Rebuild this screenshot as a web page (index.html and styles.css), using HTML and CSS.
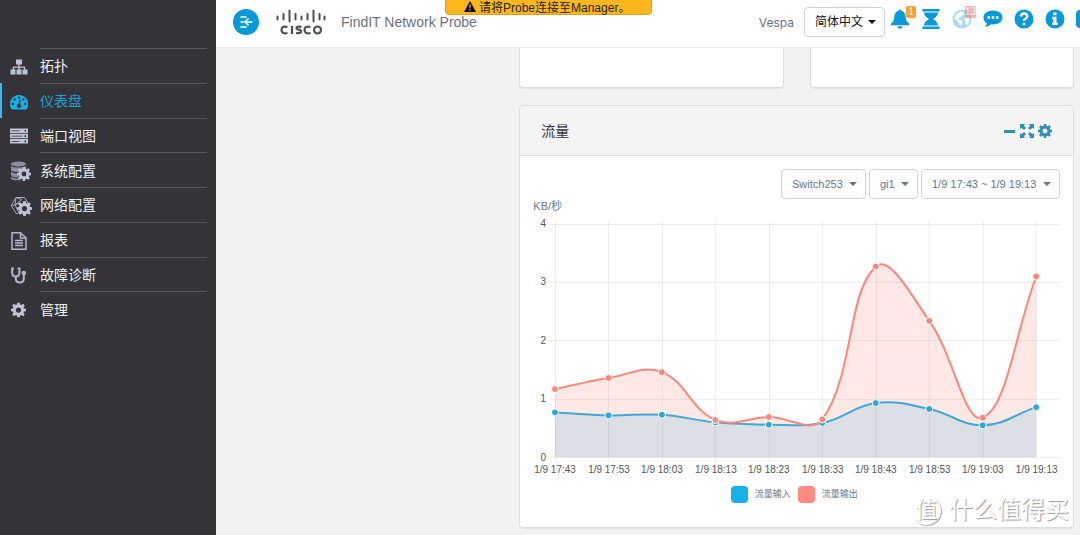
FILE: index.html
```html
<!DOCTYPE html>
<html lang="zh-CN">
<head>
<meta charset="utf-8">
<title>FindIT Network Probe</title>
<link rel="stylesheet" href="styles.css">
</head>
<body>
<svg class="defs" aria-hidden="true">
  <symbol id="gear" viewBox="0 0 16 16"><path fill-rule="evenodd" d="M6.7 0h2.6l.4 2.2 1.3.5L12.9 1.400l1.800 1.800-1.300 1.900.5 1.200 2.100.4v2.600l-2.100.4-.5 1.200 1.300 1.900-1.800 1.800-1.900-1.300-1.300.5L9.300 16H6.700l-.4-2.200-1.300-.5-1.900 1.300-1.800-1.800 1.300-1.900-.5-1.200L0 9.300V6.700l2.100-.4.5-1.200-1.300-1.900 1.800-1.800L5 2.700l1.300-.5zM8 5.200a2.800 2.800 0 1 0 0 5.600 2.800 2.800 0 0 0 0-5.600z"/></symbol>
</svg>
<div class="app">
  <aside class="sidebar">
    <nav>
      <ul class="menu">
        <li><a class="item" href="#"><svg class="icon" viewBox="0 0 18 18"><path d="M6 1.500h6v5H9.700v2h5.500v3H17.500V16.500h-5v-5h1.300V9.800H9.700v1.700h1.800v5h-5v-5h1.800V9.800H4.200v1.700h1.300v5h-5v-5h2.300v-3h5.500v-2H6z"/></svg><span class="label">拓扑</span></a></li>
        <li><a class="item active" href="#"><svg class="icon" viewBox="0 0 18 18"><path fill-rule="evenodd" d="M9 2a9 9 0 0 1 7.700 13.700q-.3.800-1.200.8h-13q-.9 0-1.200-.8A9 9 0 0 1 9 2zM9 3.400a1.200 1.200 0 1 0 0 2.400 1.200 1.200 0 0 0 0-2.400zM4.700 5.200a1.200 1.200 0 1 0 0 2.400 1.200 1.200 0 0 0 0-2.400zM13.300 5.200a1.200 1.200 0 1 0 0 2.400 1.200 1.200 0 0 0 0-2.400zM2.800 9.700a1.200 1.200 0 1 0 0 2.400 1.200 1.200 0 0 0 0-2.400zM15.200 9.700a1.200 1.200 0 1 0 0 2.400 1.200 1.200 0 0 0 0-2.400zM9.700 6.500 8.400 11a2 2 0 1 0 1.600.3L11 7z"/></svg><span class="label">仪表盘</span></a></li>
        <li><a class="item" href="#"><svg class="icon" viewBox="0 0 18 18"><path fill-rule="evenodd" d="M0 1.500h18v4.500H0zM0 6.800h18v4.500H0zM0 12.100h18v4.500H0zM1.500 3.400v.8h8v-.8zM1.500 8.700v.8h11v-.8zM1.500 14v.8h8V14zM14.500 3v1.600h1.600V3zM14.500 8.300v1.600h1.600V8.300zM14.500 13.600v1.600h1.600v-1.600z"/></svg><span class="label">端口视图</span></a></li>
        <li><a class="item" href="#"><svg class="icon wide" viewBox="0 0 22 20"><g fill="#8c8f9e"><ellipse cx="8.500" cy="3" rx="7.500" ry="2.500"/><path d="M1 4.500q1 2 7.500 2t7.500-2V8q-6 0-7 3-7 .3-8-2zM1 10.500q1 2 7 2l.5 4Q2 16.500 1 14zM1 15.500q1 2 8.500 2l1 1.500Q2 20 1 17.500z"/></g><use href="#gear" x="7" y="6" width="14" height="14"/></svg><span class="label">系统配置</span></a></li>
        <li><a class="item" href="#"><svg class="icon wide" viewBox="0 0 22 20"><path class="line" d="M6 1.500h8.500L18 7M6 1.500 1.200 9.500l5 8h2M6 1.500 5 9l4 8M1.200 9.500 5 9l7-5.500L6 1.500M5 9l4-2"/><use href="#gear" x="7" y="5" width="15" height="15"/></svg><span class="label">网络配置</span></a></li>
        <li><a class="item" href="#"><svg class="icon" viewBox="0 0 18 18"><path class="line thick" d="M2 .8h8.500L16 6v11.200H2zM10.500.8V6H16M5 8.500h8M5 11h8M5 13.500h8"/></svg><span class="label">报表</span></a></li>
        <li><a class="item" href="#"><svg class="icon" viewBox="0 0 18 18"><path class="line bold" d="M4 2.500H2.200v4q0 4 3.600 4t3.600-4v-4H7.600M5.800 10.500v2q0 4 4 4t4-4V8.500"/><circle class="line bold" cx="13.800" cy="7" r="1.300"/></svg><span class="label">故障诊断</span></a></li>
        <li><a class="item" href="#"><svg class="icon" viewBox="0 0 18 18"><use href="#gear" x="1" y="1.500" width="15" height="15"/></svg><span class="label">管理</span></a></li>
      </ul>
    </nav>
  </aside>

  <div class="page">
    <header class="topbar">
      <button class="toggle" type="button" aria-label="收起菜单"><svg viewBox="0 0 26 26"><path d="M7.500 8h6M7.500 13h3.500M7.500 18h6M19.500 13h-7M15.500 9.500 12 13l3.500 3.500"/></svg></button>
      <svg class="cisco" viewBox="0 0 50 26" role="img" aria-label="Cisco">
        <path class="bars" d="M1.500 7.500v3M7.500 5v5.500M13.500 1.500v11M19.500 5v5.500M25.500 7.500v3M31.500 5v5.500M37.500 1.500v11M43.500 5v5.500M48.500 7.500v3"/>
        <g class="word"><path d="M11.500 18q-6-1.500-6 3t6 3M16 17v8M25.500 17.800q-5-.8-5 1.200 0 1.200 2.200 1.700 2.600.5 2.400 1.900-.2 2-5 1.200M34.500 18q-6-1.500-6 3t6 3"/><circle cx="41.500" cy="21" r="3.500"/></g>
      </svg>
      <h1 class="product">FindIT Network Probe</h1>
      <div class="banner" role="alert"><svg viewBox="0 0 12 11"><path fill-rule="evenodd" d="M6 0l6 11H0zM5.200 3.500l.3 4h1l.3-4zM5.300 8.300v1.400h1.400V8.300z"/></svg><span>请将Probe连接至Manager。</span></div>
      <div class="tools">
        <span class="user">Vespa</span>
        <span class="picker language"><select aria-label="语言"><option>简体中文</option></select></span>
        <div class="actions">
          <button type="button" aria-label="通知"><svg viewBox="0 0 20 20"><path d="M10 .5q1.200 0 1.400 1.300Q15.500 3 15.700 8q.2 4.500 3.300 6.500v1.700H1v-1.700Q4.100 12.500 4.300 8q.2-5 4.300-6.200Q8.800.5 10 .5zM7.500 17.200h5q-.3 2.500-2.500 2.500t-2.500-2.500z"/></svg><span class="badge">1</span></button>
          <button type="button" aria-label="任务"><svg viewBox="0 0 20 20"><path d="M1.500 0h17v2.500h-17zM1.500 17.500h17V20h-17zM3 3.500h14q-.5 4-5 6.500 4.500 2.500 5 6.500H3q.5-4 5-6.500-4.500-2.500-5-6.500z"/></svg></button>
          <button class="faded" type="button" aria-label="网络状态"><svg viewBox="0 0 20 20"><path fill-rule="evenodd" d="M10 .5a9.500 9.500 0 1 0 0 19 9.500 9.500 0 0 0 0-19zM8 2.500l3 .5 1 2-2 2.500-3 1-1 2 3 .5 1.500 2-1 3.500-2.500-1-1-3-3.500-2.500Q3 5 8 2.500zM13.500 8l3.500 1 .5 3-2.500 4-2-1 .5-3-1.500-2z"/></svg><span class="badge red">13</span></button>
          <button type="button" aria-label="反馈"><svg viewBox="0 0 20 20"><path fill-rule="evenodd" d="M10 1.500c5.500 0 9.500 3 9.500 7s-4 7-9.500 7l-2-.2Q5.500 18 2 18q1.800-2 1.700-4Q.5 12 .5 8.500c0-4 4-7 9.500-7zM4.500 7.200v2.600h2.600V7.200zM8.700 7.200v2.600h2.600V7.200zM12.900 7.200v2.600h2.600V7.200z"/></svg></button>
          <button type="button" aria-label="帮助"><svg viewBox="0 0 20 20"><circle cx="10" cy="10" r="9.500"/><path class="cut" d="M6.800 7.500q.4-3 3.300-3 3.100 0 3.100 2.700 0 1.500-1.700 2.400Q10 10.300 10 12M10 13.800v2.400"/></svg></button>
          <button type="button" aria-label="关于"><svg viewBox="0 0 20 20"><circle cx="10" cy="10" r="9.500"/><path class="white" d="M8.300 3.500h3.200v2.700H8.300zM7 7.700h4.500v6H13V16H7v-2.300h1.300V10H7z"/></svg></button>
          <button type="button" aria-label="更多"><svg viewBox="0 0 20 20"><rect x="0" y="1" width="20" height="18" rx="4"/><path class="cut" d="M5 10h10"/></svg></button>
        </div>
      </div>
    </header>

    <main class="dashboard">
      <section class="card stub"></section>
      <section class="card stub last"></section>
      <section class="card traffic">
        <div class="card-head">
          <h2>流量</h2>
          <div class="card-tools">
            <button type="button" aria-label="最小化"><svg viewBox="0 0 14 14"><path d="M2 6h11v3H2z"/></svg></button>
            <button type="button" aria-label="全屏"><svg viewBox="0 0 14 14"><path d="M0 0h5L3.700 1.500 6 4 4 6 1.500 3.700 0 5zM14 0H9l1.300 1.500L8 4l2 2 2.500-2.300L14 5zM0 14h5l-1.300-1.500L6 10 4 8l-2.500 2.300L0 9zM14 14H9l1.300-1.500L8 10l2-2 2.500 2.300L14 9z"/></svg></button>
            <button type="button" aria-label="设置"><svg viewBox="0 0 14 14"><use href="#gear" width="14" height="14"/></svg></button>
          </div>
        </div>
        <div class="filters">
          <span class="picker"><select aria-label="设备"><option>Switch253</option></select></span>
          <span class="picker"><select aria-label="端口"><option>gi1</option></select></span>
          <span class="picker"><select aria-label="时间范围"><option>1/9 17:43 ~ 1/9 19:13</option></select></span>
        </div>
        <p class="unit">KB/秒</p>
        <svg class="chart" id="chart" viewBox="0 0 553 264" role="img" aria-label="流量"></svg>
        <ul class="legend">
          <li><span class="swatch in"></span>流量输入</li>
          <li><span class="swatch out"></span>流量输出</li>
        </ul>
      </section>
    </main>
    <div class="watermark"><span class="seal">值</span><span>什么值得买</span></div>
  </div>
</div>
<script src="chart.js"></script>
</body>
</html>
```

FILE: styles.css
```css
* { box-sizing: border-box; }

body {
  margin: 0;
  background: #f2f2f2;
  font-family: "Liberation Sans", Arial, "Noto Sans CJK SC", sans-serif;
  font-size: 12px;
  color: #6b7280;
}

button, select { font: inherit; cursor: pointer; }
h1, h2, p, ul { margin: 0; padding: 0; font-weight: 400; }
ul { list-style: none; }
svg { display: block; }
.defs { position: absolute; width: 0; height: 0; }

.app {
  display: flex;
  min-height: 100vh;
}

/* Sidebar */
.sidebar {
  flex: 0 0 216px;
  padding-top: 48px;
  background: #343338;
}
.menu {
  display: grid;
  grid-auto-rows: 1fr;
  height: 278px;
}
.item {
  display: flex;
  align-items: center;
  height: 100%;
  padding: 0 9px 0 8px;
  border-left: 2px solid transparent;
  color: #f0f0f2;
  font-size: 14px;
  line-height: 20px;
  text-decoration: none;
}
.item .icon {
  flex: none;
  width: 18px;
  height: 18px;
  margin: 3px 12px 0 0;
  fill: #bfc3d8;
}
.item .icon.wide { width: 22px; height: 20px; margin-right: 8px; }
.label {
  flex: 1;
  display: flex;
  align-items: center;
  height: 100%;
  padding-top: 1px;
  border-top: 1px solid #58585d;
}
.item.active { border-left-color: #3fb4e8; color: #1ba0d1; }
.item.active .icon { fill: #14b1e7; }
.line { fill: none; stroke: #a6aabd; stroke-width: 1; }
.line.thick { stroke: #b4b8cc; stroke-width: 1.5; }
.line.bold { stroke: #b4b8cc; stroke-width: 2; }

/* Header */
.page {
  position: relative;
  flex: 1;
  min-width: 0;
}
.topbar {
  position: relative;
  display: flex;
  align-items: center;
  height: 48px;
  padding-left: 17px;
  padding-bottom: 3px;
  overflow: hidden;
  background: #fff;
  border-bottom: 1px solid #ececec;
}
.toggle {
  width: 26px;
  height: 26px;
  padding: 0;
  border: 0;
  border-radius: 50%;
  background: #0899d8;
}
.toggle path { fill: none; stroke: #fff; stroke-width: 1.6; }
.cisco { width: 50px; height: 26px; margin-left: 17px; }
.cisco path, .cisco circle { fill: none; stroke: #4c4f54; stroke-width: 2.2; }
.cisco .bars { stroke-width: 2; stroke-linecap: round; }
.product {
  margin-left: 15px;
  padding-bottom: 1px;
  font-size: 14px;
  line-height: 20px;
  white-space: nowrap;
}
.banner {
  position: absolute;
  top: -5px;
  left: 229px;
  display: flex;
  align-items: center;
  gap: 3px;
  width: 207px;
  height: 20px;
  padding: 2px 18px 0;
  border: 1px solid #dfa01c;
  border-radius: 4px;
  background: #fdb61c;
  color: #222;
  white-space: nowrap;
}
.banner svg { flex: none; width: 12px; height: 11px; }
.tools {
  display: flex;
  align-items: center;
  margin: 0 -17px 0 auto;
}
.user { margin-right: 10px; font-family: Inter, sans-serif; }
.picker { position: relative; display: inline-block; }
.picker select {
  appearance: none;
  height: 30px;
  padding: 0 22px 0 10px;
  border: 1px solid #d2d2d2;
  border-radius: 4px;
  background: #fff;
  color: #65788b;
  font-size: 11px;
}
.picker::after {
  content: "";
  position: absolute;
  top: 13px;
  right: 9px;
  border: 4px solid transparent;
  border-top-color: currentColor;
  border-bottom: 0;
  pointer-events: none;
}
.language { color: #111; }
.language select { padding-right: 20px; color: #111; font-size: 12px; }
.actions {
  display: flex;
  gap: 10px;
  margin-left: 5px;
  padding-bottom: 7px;
}
.actions button {
  position: relative;
  width: 21px;
  height: 20px;
  padding: 0;
  border: 0;
  background: none;
}
.actions svg { width: 20px; height: 20px; fill: #0899d8; }
.cut { fill: none; stroke: #fff; stroke-width: 2.6; }
.white { fill: #fff; }
.badge {
  position: absolute;
  top: -3px;
  right: -5px;
  min-width: 10px;
  border-radius: 2px;
  background: #f7a02f;
  color: #fff;
  font-size: 10px;
  line-height: 12px;
  text-align: center;
}
.badge.red { right: -3px; background: #f87c7c; }
.faded svg { opacity: 0.35; }
.faded .badge { opacity: 0.6; }

/* Dashboard */
.dashboard {
  display: grid;
  grid-template-columns: repeat(3, 1fr);
  gap: 17px 26px;
  padding: 0 6px 7px 13px;
}
.card {
  border: 1px solid #dedede;
  border-radius: 4px;
  background: #fff;
  box-shadow: 0 1px 1px #e4e4e4;
}
.stub {
  grid-column: 2;
  height: 40px;
  border-top: 0;
  border-radius: 0 0 4px 4px;
}
.stub.last { grid-column: 3; }
.traffic { grid-column: 2 / 4; }
.card-head {
  display: flex;
  align-items: center;
  justify-content: space-between;
  height: 50px;
  padding: 0 21px;
  border-bottom: 1px solid #e0e0e0;
  border-radius: 4px 4px 0 0;
  background: #f4f4f4;
}
.card-head h2 { color: #333; font-size: 14px; line-height: 20px; }
.card-tools { display: flex; gap: 4px; }
.card-tools button {
  width: 14px;
  height: 14px;
  padding: 0;
  border: 0;
  background: none;
}
.card-tools svg { fill: #2f8fb8; }
.filters {
  display: flex;
  justify-content: flex-end;
  gap: 3px;
  padding: 13px 13px 0 0;
}
.unit {
  padding-left: 13px;
  color: #65788b;
  font-size: 11px;
  line-height: 15px;
}
.chart { width: 100%; height: auto; }
.chart text {
  fill: #555;
  font-size: 10px;
}
.grid { stroke: #000; stroke-opacity: 0.08; }
.fill-in { fill: rgba(20, 177, 231, 0.15); }
.fill-out { fill: rgba(255, 138, 128, 0.2); }
.stroke { fill: none; stroke-width: 2; }
.stroke.in { stroke: #3fa8d4; }
.stroke.out { stroke: #fb877c; }
.dot { stroke: #fff; stroke-width: 1; }
.dot.in { fill: #2ea6d8; }
.dot.out { fill: #fb877c; }
.legend {
  display: flex;
  justify-content: center;
  gap: 7px;
  padding: 8px 5px 24px 0;
  color: #65788b;
  font-size: 9px;
  line-height: 17px;
}
.legend li { display: flex; gap: 7px; }
.swatch { width: 17px; height: 17px; border-radius: 4px; }
.swatch.in { background: #17b1e8; }
.swatch.out { background: #ff8a80; }

.watermark {
  position: absolute;
  right: 11px;
  bottom: 10px;
  display: flex;
  align-items: center;
  gap: 8px;
  color: #fff;
  font-size: 24px;
  line-height: 30px;
  text-shadow: 1px 1px 1px #999;
  pointer-events: none;
}
.seal {
  width: 29px;
  height: 29px;
  border-radius: 50%;
  box-shadow: 1px 1px 1px #aaa;
  font-size: 22px;
  line-height: 28px;
  text-align: center;
}
```

FILE: chart.js
```js
const labels = ["17:43", "17:53", "18:03", "18:13", "18:23", "18:33", "18:43", "18:53", "19:03", "19:13"];
const incoming = [0.77, 0.72, 0.73, 0.6, 0.56, 0.59, 0.93, 0.83, 0.55, 0.86];
const outgoing = [1.17, 1.36, 1.46, 0.64, 0.69, 0.65, 3.27, 2.34, 0.68, 3.1];

const left = 35, right = 516.500, top_ = 10, bottom = 243.500, edge = 540;
const x = i => left + i * (right - left) / (labels.length - 1);
const y = v => bottom - v * (bottom - top_) / 4;

// Cardinal-style smoothing: handles are weighted by the distance to each neighbour.
function curve(values) {
  const p = values.map((v, i) => [x(i), y(v)]);
  const handles = p.map((c, i) => {
    const a = p[i - 1] || c, b = p[i + 1] || c;
    const da = Math.hypot(c[0] - a[0], c[1] - a[1]);
    const db = Math.hypot(b[0] - c[0], b[1] - c[1]);
    const fa = 0.4 * da / (da + db), fb = 0.4 * db / (da + db);
    const dx = b[0] - a[0], dy = b[1] - a[1];
    return [[c[0] - fa * dx, c[1] - fa * dy], [c[0] + fb * dx, c[1] + fb * dy]];
  });
  return "M" + p[0] + p.slice(1).map((c, i) => `C${handles[i][1]} ${handles[i + 1][0]} ${c}`).join("");
}

let out = "";
for (let v = 0; v <= 4; v++) {
  out += `<path class="grid" d="M30 ${Math.floor(y(v)) + 0.5}H${edge}"/>`;
  out += `<text x="26" y="${Math.round(y(v)) + 3}" text-anchor="end">${v}</text>`;
}
labels.forEach((t, i) => {
  out += `<path class="grid" d="M${Math.floor(x(i)) + 0.5} 7V248"/>`;
  out += `<text x="${Math.round(x(i))}" y="259" text-anchor="middle">1/9 ${t}</text>`;
});
for (const [name, values] of [["out", outgoing], ["in", incoming]]) {
  out += `<path class="fill-${name}" d="${curve(values)}V${bottom}H${left}Z"/>`;
}
for (const [name, values] of [["in", incoming], ["out", outgoing]]) {
  out += `<path class="stroke ${name}" d="${curve(values)}"/>`;
  values.forEach((v, i) => {
    out += `<circle class="dot ${name}" cx="${x(i)}" cy="${y(v)}" r="3.500"/>`;
  });
}
document.getElementById("chart").innerHTML = out;
```
